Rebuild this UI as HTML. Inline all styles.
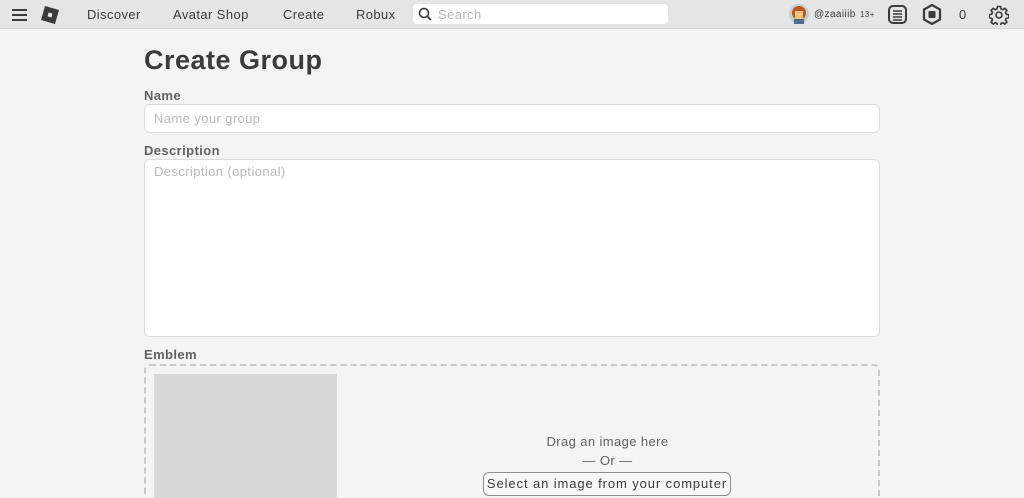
<!DOCTYPE html>
<html><head><style>
*{box-sizing:border-box;margin:0;padding:0}
html,body{width:1024px;height:498px;overflow:hidden}
body{background:#f2f4f5;font-family:"Liberation Sans",sans-serif;color:#393b3d;position:relative;letter-spacing:0.4px}
.nav{position:absolute;left:0;top:0;width:1024px;height:29px;background:#e3e5e7;border-bottom:1px solid #d4d6d8}
.nav a{position:absolute;top:7px;font-size:13px;color:#393b3d}
.search{position:absolute;left:413px;top:4px;width:255px;height:20px;background:#fff;border-radius:4px}
.search span{position:absolute;left:25px;top:3px;font-size:13px;color:#b8b8b8}
h1{position:absolute;left:144px;top:45px;font-size:27px;font-weight:bold;color:#393b3d;letter-spacing:0.5px}
.lbl{position:absolute;left:144px;font-size:13px;font-weight:bold;color:#606264}
.inp{position:absolute;left:144px;width:736px;background:#fff;border:1px solid #d9dadb;border-radius:6px}
.inp span{position:absolute;left:9px;font-size:13px;color:#b8b8b8}
.drop{position:absolute;left:144px;top:364px;width:736px;height:150px;border:2px dashed #c6c8ca;border-radius:6px}
.gray{position:absolute;left:154px;top:374px;width:183px;height:130px;background:#d7d8d9}
.t{position:absolute;font-size:13px;color:#606264;text-align:center}
.btn{position:absolute;left:483px;top:472px;width:248px;height:24px;border:1px solid #8c8e90;border-radius:6px;font-size:13px;color:#393b3d;text-align:center;line-height:22px;background:#f7f7f8;letter-spacing:0.9px}
</style></head><body>
<div class="nav">
<svg style="position:absolute;left:12px;top:9px" width="15" height="12"><rect y="0" width="15" height="2" fill="#393b3d"/><rect y="5" width="15" height="2" fill="#393b3d"/><rect y="10" width="15" height="2" fill="#393b3d"/></svg>
<svg style="position:absolute;left:41px;top:6px" width="18" height="18"><polygon points="4,0 18,4 14,18 0,14" fill="#393b3d"/><rect x="7" y="7" width="4" height="4" fill="#e3e5e7" transform="rotate(15 9 9)"/></svg>
<a style="left:87px">Discover</a><a style="left:173px">Avatar Shop</a><a style="left:283px">Create</a><a style="left:356px">Robux</a>
<div class="search"><svg style="position:absolute;left:5px;top:3px" width="14" height="14"><circle cx="6" cy="6" r="4.5" stroke="#393b3d" stroke-width="1.6" fill="none"/><line x1="9.5" y1="9.5" x2="13" y2="13" stroke="#393b3d" stroke-width="1.8"/></svg><span>Search</span></div>
<svg style="position:absolute;left:789px;top:4px" width="20" height="20"><circle cx="10" cy="10" r="10" fill="#c9cbcd"/><circle cx="10" cy="9" r="7" fill="#b35a1f"/><rect x="6" y="7" width="8" height="8" fill="#f1c27d"/><rect x="5" y="15" width="10" height="5" fill="#4a6c8f"/></svg>
<a style="left:814px;top:9px;font-size:10px">@zaaiiib</a><a style="left:860px;top:10px;font-size:8px">13+</a>
<svg style="position:absolute;left:888px;top:5px" width="19" height="19"><rect x="1" y="1" width="17" height="17" rx="4" fill="none" stroke="#393b3d" stroke-width="2"/><g stroke="#393b3d" stroke-width="1.5"><line x1="5" y1="6" x2="14" y2="6"/><line x1="5" y1="9" x2="14" y2="9"/><line x1="5" y1="12" x2="14" y2="12"/><line x1="5" y1="15" x2="14" y2="15"/></g></svg>
<svg style="position:absolute;left:922px;top:4px" width="20" height="21"><polygon points="10,1 18,5.5 18,15.5 10,20 2,15.5 2,5.5" fill="none" stroke="#393b3d" stroke-width="2.2"/><rect x="6.5" y="7" width="7" height="7" rx="1" fill="#393b3d"/></svg>
<a style="left:959px;top:7px">0</a>
<svg style="position:absolute;left:989px;top:5px" width="20" height="20" viewBox="0 0 20 20"><g fill="none" stroke="#393b3d" stroke-width="1.6"><circle cx="10" cy="10" r="3"/><path d="M8.5 1.5h3l.5 2.4 1.8.8 2-1.4 2.1 2.1-1.4 2 .8 1.8 2.4.5v3l-2.4.5-.8 1.8 1.4 2-2.1 2.1-2-1.4-1.8.8-.5 2.4h-3l-.5-2.4-1.8-.8-2 1.4-2.1-2.1 1.4-2-.8-1.8-2.4-.5v-3l2.4-.5.8-1.8-1.4-2 2.1-2.1 2 1.4 1.8-.8z"/></g></svg>
</div>
<h1>Create Group</h1>
<div class="lbl" style="top:88px">Name</div>
<div class="inp" style="top:104px;height:29px"><span style="top:6px">Name your group</span></div>
<div class="lbl" style="top:143px">Description</div>
<div class="inp" style="top:159px;height:178px"><span style="top:4px">Description (optional)</span></div>
<div class="lbl" style="top:347px">Emblem</div>
<div class="drop"></div>
<div class="gray"></div>
<div class="t" style="left:530px;top:434px;width:155px">Drag an image here</div>
<div class="t" style="left:560px;top:453px;width:95px">— Or —</div>
<div class="btn">Select an image from your computer</div>
</body></html>
